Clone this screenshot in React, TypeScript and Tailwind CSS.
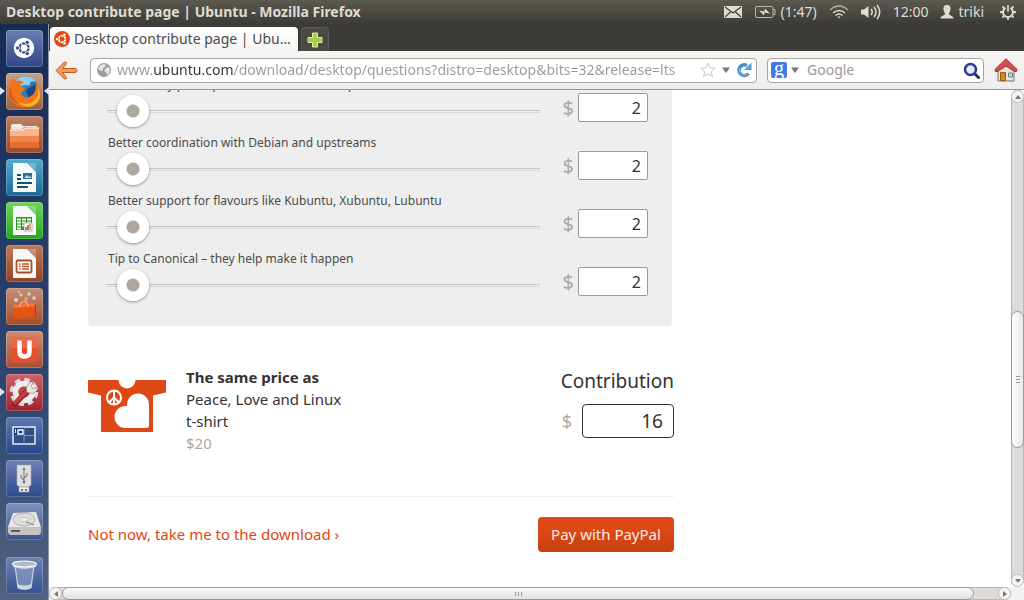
import { useState, type ReactNode } from "react";

const causes = [
  { id: "community", label: "Community participation in Ubuntu development" },
  { id: "debian", label: "Better coordination with Debian and upstreams" },
  { id: "flavours", label: "Better support for flavours like Kubuntu, Xubuntu, Lubuntu" },
  { id: "tip", label: "Tip to Canonical – they help make it happen" }
];

function CircleOfFriends({ className, fill }: { className?: string; fill: string }) {
  return (
    <svg viewBox="0 0 20 20" className={className} aria-hidden="true">
      <circle cx="10" cy="10" r="10" fill={fill} />
      <circle cx="10" cy="10" r="4.2" fill="none" stroke="currentColor" strokeWidth="2.3" />
      <g stroke={fill} strokeWidth="0.9">
        <path d="M10 10 16 10M10 10 7 4.8M10 10 7 15.2" />
      </g>
      <g fill="currentColor" stroke={fill} strokeWidth="0.8">
        <circle cx="3.8" cy="10" r="2" />
        <circle cx="13.1" cy="4.6" r="2" />
        <circle cx="13.1" cy="15.4" r="2" />
      </g>
    </svg>
  );
}

function Page({ children }: { children: ReactNode }) {
  return (
    <>
      <path d="M7 4h14l9 9v20H7z" fill="#f7f7f5" />
      <path d="M22 4h8v8z" fill="#fff" opacity="0.25" />
      {children}
    </>
  );
}

const apps = [
  {
    name: "Dash home",
    tile: "from-[#6b7fb4] to-[#2d4784]",
    icon: (
      <g color="#2f4a86">
        <circle cx="18" cy="18" r="10.2" fill="#fff" />
        <circle cx="18" cy="18" r="4.6" fill="none" stroke="currentColor" strokeWidth="2.4" />
        <path d="M18 18h7M18 18l-3.5-6M18 18l-3.5 6" stroke="#fff" strokeWidth="1" />
        <g fill="currentColor" stroke="#fff" strokeWidth="0.9">
          <circle cx="11.5" cy="18" r="2.1" />
          <circle cx="21.2" cy="12.4" r="2.1" />
          <circle cx="21.2" cy="23.6" r="2.1" />
        </g>
      </g>
    )
  },
  {
    name: "Firefox",
    tile: "from-[#c8a08a] to-[#a0603c]",
    icon: (
      <>
        <circle cx="20" cy="16" r="12.5" fill="#2b7cc0" />
        <path d="M10 8c5-6 16-6 20 1-4-2-7 0-6 3-4 1-7-1-9 2-3-1-6-2-5-6z" fill="#8fd0f0" />
        <path d="M20 18c3-5 8-4 9-8 3 5 3 9 0 14l-6 2z" fill="#174a84" />
        <path d="M4 10c1-3 3-4 4-5 0 2 1 3 3 3 3-1 5 0 7 2-3 0-4 2-3 4 2 0 4 0 4 2-1 2-3 2-4 4 1 4 6 6 10 3 4-2 6-8 4-14 5 5 7 12 3 18-4 7-13 9-20 6C4 29 0 19 4 10z" fill="#f0741a" />
        <path d="M8 24c3 6 12 9 18 5 5-3 7-8 6-15 3 6 3 12-1 16-6 6-17 5-23-6z" fill="#f9b22b" />
        <path d="M5 14c-1 8 3 14 10 17-9-1-14-9-10-17z" fill="#d9400d" opacity="0.8" />
      </>
    )
  },
  {
    name: "Files",
    tile: "from-[#bb8268] to-[#9c4b2b]",
    icon: (
      <>
        <path d="M5 12V9l2-1h8l2 2h14v6H5z" fill="#f6e9df" />
        <path d="M4 13h12l2-2h15v21H4z" fill="#ee8550" />
        <path d="M4 14h13l2-2h14v8H4z" fill="#f8b48d" />
        <path d="M4 26h29v6H4z" fill="#e46c31" />
        <path d="M4 14h13l2-2h14" fill="none" stroke="#fff" strokeWidth="1" />
      </>
    )
  },
  {
    name: "LibreOffice Writer",
    tile: "from-[#57a9cc] to-[#1b6a98]",
    icon: (
      <Page>
        <path d="M11 16h4M11 20h4M11 24h15M11 28h11" stroke="#16506f" strokeWidth="2" />
        <path d="M17 14h9v6h-9z" fill="#2e6f97" />
        <path d="m18 19 3-3 2 2 2-1v2z" fill="#b6e0f3" />
      </Page>
    )
  },
  {
    name: "LibreOffice Calc",
    tile: "from-[#6fd35c] to-[#22a51d]",
    icon: (
      <Page>
        <path d="M10 15h16v13H10z" fill="#2d9421" />
        <path d="M11 16.500h4v2h-4zm5 0h4v2h-4zm5 0h4v2h-4zm-10 3h4v2h-4zm5 0h4v2h-4zm5 0h4v2h-4zm-10 3h4v2h-4zm5 0h4v2h-4zm-5 3h4v2h-4z" fill="#edf9ea" />
        <path d="M18 21h8v8h-8z" fill="#fff" stroke="#888" strokeWidth="0.6" />
        <path d="M20 28v-3" stroke="#d34b2b" strokeWidth="1.500" />
        <path d="M22 28v-5" stroke="#3174b5" strokeWidth="1.500" />
        <path d="M24 28v-6" stroke="#e98f22" strokeWidth="1.500" />
      </Page>
    )
  },
  {
    name: "LibreOffice Impress",
    tile: "from-[#bd7a5b] to-[#924323]",
    icon: (
      <Page>
        <rect x="10.500" y="15.500" width="15" height="12" rx="1.500" fill="#fff" stroke="#a5512d" strokeWidth="1.800" />
        <path d="M13 19h1.500M13 21.500h1.500M13 24h1.500M16 19h7M16 21.500h7M16 24h7" stroke="#c2561c" strokeWidth="1.400" />
      </Page>
    )
  },
  {
    name: "Ubuntu Software Center",
    tile: "from-[#c58f7a] to-[#a44d29]",
    icon: (
      <>
        <g fill="#d8d2cf">
          <circle cx="10" cy="12" r="2" />
          <circle cx="15" cy="7" r="1.500" />
          <circle cx="23" cy="6" r="1.800" />
          <circle cx="28" cy="10" r="1.800" />
          <circle cx="20" cy="11" r="2" fill="#ef9d6b" />
          <circle cx="13" cy="4" r="1" />
        </g>
        <path d="m7 17 23-2v14L7 31z" fill="#e75312" />
        <path d="m7 17 23-2v3L7 20z" fill="#f4783a" />
        <path d="M14 19c0-7 8-7 8 0" fill="none" stroke="#f7a371" strokeWidth="1.400" />
        <path d="m29 15 1 2v11l-1 2z" fill="#b33a08" />
      </>
    )
  },
  {
    name: "Ubuntu One",
    tile: "from-[#cf8c74] to-[#a84e31]",
    icon: (
      <>
        <rect x="6" y="6" width="25" height="25" rx="2" fill="#e6512c" />
        <path d="M6 8a2 2 0 0 1 2-2h21a2 2 0 0 1 2 2v9H6z" fill="#f07350" opacity="0.7" />
        <path d="M13.500 9.500v11q0 5 5 5t5-5v-11" fill="none" stroke="#fff" strokeWidth="4.500" />
      </>
    )
  },
  {
    name: "System Settings",
    tile: "from-[#cd6267] to-[#9c2230]",
    icon: (
      <>
        <circle cx="18" cy="18" r="12" fill="none" stroke="#dedad7" strokeWidth="4.500" strokeDasharray="5.400 4.020" />
        <circle cx="18" cy="18" r="8.500" fill="none" stroke="#efedeb" strokeWidth="5.500" />
        <path d="m9 30 13-14" stroke="#8b1a22" strokeWidth="5.500" strokeLinecap="round" />
        <path d="m9 29 12-12" stroke="#cc3b37" strokeWidth="3.500" strokeLinecap="round" />
        <path d="M21 18c-2-5 1-10 7-11l-3 5 2 3 5-2c-1 6-6 8-11 5z" fill="#e9e6e3" stroke="#8c8784" strokeWidth="0.700" />
      </>
    )
  },
  {
    name: "Workspace Switcher",
    tile: "from-[#6079b1] to-[#26458a]",
    icon: (
      <>
        <path d="M7 10h22v17H7z" fill="#314f85" stroke="#e9edf4" strokeWidth="1.500" />
        <path d="M18 10v17M7 18.500h22" stroke="#8d9ebf" strokeWidth="0.900" />
        <path d="M8 11h10v7.500H8z" fill="#203d73" />
        <path d="M12 13h5v4h-5z" fill="none" stroke="#fff" strokeWidth="1.400" />
        <path d="M9.500 12v4" stroke="#dfe5ef" />
      </>
    )
  },
  {
    name: "USB drive",
    tile: "from-[#6c80b4] to-[#2d4a8d]",
    icon: (
      <>
        <path d="M11 5h14v20l-3 2h-8l-3-2z" fill="#dedfdf" stroke="#a9acb1" strokeWidth="0.700" />
        <path d="M13 27h10v5H13z" fill="#f1f1f0" stroke="#9a9da2" strokeWidth="0.700" />
        <path d="M15 29h2v2h-2zm4 0h2v2h-2z" fill="#777" />
        <path d="M18 9v13M18 20l-3-2.500V15M18 18l3-2.500V13" fill="none" stroke="#777b80" strokeWidth="1.100" />
        <path d="m16.300 10 1.700-3 1.700 3z" fill="#777b80" />
        <circle cx="18" cy="22" r="1.500" fill="#777b80" />
      </>
    )
  },
  {
    name: "Hard disk",
    tile: "from-[#8193bd] to-[#39538d]",
    icon: (
      <>
        <path d="m7 10 23-1 5 15H2z" fill="#e7e7e4" />
        <path d="M2 24h33v6l-2 2H4l-2-2z" fill="#c3c4c2" />
        <path d="M5 27h9v2H5z" fill="#5b5d5f" />
        <ellipse cx="18" cy="16.500" rx="11" ry="6.500" fill="#dcdddb" stroke="#9fa19f" strokeWidth="0.700" />
        <ellipse cx="18" cy="16.500" rx="3.500" ry="2" fill="#f6f6f4" stroke="#a9aba8" strokeWidth="0.600" />
        <path d="m28 22-8-3" stroke="#8d908d" strokeWidth="1.300" />
      </>
    )
  },
  {
    name: "Trash",
    tile: "from-[#6e83b5] to-[#34518f] mt-auto",
    icon: (
      <>
        <path d="M9 8h19l-3 23q-7 3-13 0z" fill="#8ea0c4" opacity="0.650" />
        <path d="m9 8 3 23M28 8l-3 23" stroke="#c9d2e2" strokeWidth="1.200" />
        <path d="M11.500 27q7 3 14 0l-.6 4.500q-6.500 2.500-12.800 0z" fill="#d4d6d5" />
        <ellipse cx="18.500" cy="7" rx="12" ry="2.800" fill="#aeb9cd" stroke="#edf0f3" strokeWidth="1.300" />
        <path d="M7 9q11.500 4 23 0" fill="none" stroke="#dfe4ea" strokeWidth="1.500" />
      </>
    )
  }
];

function TopBar() {
  return (
    <header className="flex h-6 shrink-0 items-center justify-between bg-linear-to-b from-[#5b5950] to-[#3d3b37] pr-2 pl-[6px] text-sm text-[#dfdbd2]">
      <h1 className="truncate font-bold">Desktop contribute page | Ubuntu - Mozilla Firefox</h1>
      <div className="flex shrink-0 items-center">
        <svg viewBox="0 0 18 12" className="mr-[13px] h-3 w-[18px]" aria-label="Messages">
          <path d="M0 0h18v12H0z" fill="#dfdbd2" />
          <path d="m1 1 8 6 8-6M1 11l5.500-5M17 11l-5.500-5" fill="none" stroke="#45433c" strokeWidth="1.300" />
        </svg>
        <svg viewBox="0 0 21 12" className="mr-1 h-3 w-[21px]" aria-label="Battery">
          <rect x="0.500" y="0.500" width="17.500" height="11" rx="1.500" fill="none" stroke="#bdb9b0" />
          <path d="M18.500 3.500h1.500v5h-1.500" fill="none" stroke="#bdb9b0" />
          <path d="m4 4.500 5.500 1L10 2.500l5 5-5.500-1L9 9.500z" fill="#dfdbd2" />
        </svg>
        <span className="mr-3">(1:47)</span>
        <svg viewBox="0 0 20 14" className="mr-3 h-[14px] w-5" fill="none" stroke="#dfdbd2" strokeWidth="1.500" aria-label="Network">
          <path d="M1 5q9-8 18 0" opacity="0.700" />
          <path d="M4 8q6-5 12 0M6.500 10.500q3.500-3 7 0" />
          <path d="m8.500 11.500 1.500 2 1.500-2z" fill="#dfdbd2" stroke="none" />
        </svg>
        <svg viewBox="0 0 20 16" className="mr-3 h-4 w-5" fill="none" stroke="#dfdbd2" strokeWidth="1.500" aria-label="Sound">
          <path d="M0 5.500h3L7.500 2v12L3 10.500H0z" fill="#dfdbd2" stroke="none" />
          <path d="M10 5q2.500 3 0 6M13 3q4 5 0 10M16 1q5.500 7 0 14" />
        </svg>
        <span className="mr-3">12:00</span>
        <svg viewBox="0 0 14 14" className="mr-1 size-[14px]" fill="#dfdbd2" aria-hidden="true">
          <path d="M7 0c3 0 3.800 2 3.500 4.500C10.200 7 9 8 9 9c0 1.500 4.500 1.500 4.500 4.500H.5C.5 10.500 5 10.500 5 9c0-1-1.200-2-1.500-4.500C3.200 2 4 0 7 0z" />
        </svg>
        <span className="mr-4">triki</span>
        <svg viewBox="0 0 16 16" className="size-4" fill="none" stroke="#dfdbd2" aria-label="Session">
          <path d="M5.500 3.800a5 5 0 1 0 5 0" strokeWidth="2" />
          <path d="M8 1v6.500" strokeWidth="1.700" />
          <path d="M2.400 2.400l2 2M13.600 2.400l-2 2M0 8h3M13 8h3M2.400 13.600l2-2M13.600 13.600l-2-2M8 13v3" strokeWidth="1.800" />
        </svg>
      </div>
    </header>
  );
}

function Launcher() {
  return (
    <nav className="flex w-[49px] shrink-0 flex-col gap-[6px] border-r border-[#8997b1] bg-linear-to-b from-[#152c55] via-[#2c4570] via-60% to-[#50627e] px-[6px] py-[6px]">
      {apps.map((app) => (
        <button
          key={app.name}
          type="button"
          aria-label={app.name}
          className={"relative size-[37px] shrink-0 rounded bg-linear-to-b inset-ring inset-ring-white/20 " + app.tile}
        >
          <svg viewBox="0 0 37 37" className="size-full" fill="none">
            {app.icon}
          </svg>
          {(app.name === "Firefox" || app.name === "System Settings") && (
            <span className="absolute top-[14px] -left-[6px] border-y-4 border-l-5 border-y-transparent border-l-[#dfe3ea]" />
          )}
          {app.name === "Firefox" && (
            <span className="absolute top-[14px] -right-[6px] border-y-4 border-r-5 border-y-transparent border-r-[#dfe3ea]" />
          )}
        </button>
      ))}
    </nav>
  );
}

function TabStrip() {
  return (
    <div className="flex h-[27px] shrink-0 items-end gap-[3px] bg-[#3c3b37] pl-px">
      <div className="flex h-6 w-62 items-center gap-1 rounded-t bg-linear-to-b from-white to-[#f5f4f3] px-1 text-sm text-[#4c4c4c]">
        <CircleOfFriends className="size-4 shrink-0 text-white" fill="#dd4814" />
        <span className="truncate">Desktop contribute page | Ubu…</span>
      </div>
      <button type="button" aria-label="New tab" className="flex h-6 w-7 items-center justify-center rounded-t border border-b-0 border-[#5c5a54] bg-[#4a4944]">
        <svg viewBox="0 0 16 16" className="size-4">
          <path d="M5.500 1h5v4.500H15v5h-4.500V15h-5v-4.500H1v-5h4.500z" fill="#a5cf45" stroke="#d8efa4" />
        </svg>
      </button>
    </div>
  );
}

function Toolbar() {
  return (
    <div className="flex h-[39px] shrink-0 items-center border-b border-[#979593] bg-linear-to-b from-[#f5f4f3] to-[#efedec] px-[6px] text-sm">
      <button type="button" aria-label="Back" className="mr-3">
        <svg viewBox="0 0 23 19" className="h-[19px] w-[23px]">
          <path d="M9.500 1 1 9.500 9.500 18q2.500.5 2-1.500L7.500 11.500H20q2-.3 2-2T20 7.500H7.500l4-5Q11.500.5 9.500 1z" fill="#f39a63" stroke="#c35a20" />
        </svg>
      </button>
      <div className="flex h-[25px] min-w-0 grow items-center rounded border border-[#a8a4a0] bg-white pr-1 pl-[6px]">
        <svg viewBox="0 0 14 14" className="mr-[6px] size-[14px] shrink-0" aria-hidden="true">
          <circle cx="7" cy="7" r="7" fill="#9b9b9b" />
          <path d="M3 2.500 6 1l3 1-1 2-2 1v2L4 8 1 6zM9 5l3-1 1 3-1 4-2 1-1-3-2-1z" fill="#e6e6e6" />
        </svg>
        <input
          type="text"
          aria-label="Address"
          defaultValue="www.ubuntu.com/download/desktop/questions?distro=desktop&bits=32&release=lts"
          className="min-w-0 grow bg-[linear-gradient(90deg,#999_37px,#333_37px,#333_117px,#999_117px)] bg-clip-text text-transparent outline-none"
        />
        <svg viewBox="0 0 16 16" className="mr-[6px] size-4 shrink-0" aria-hidden="true">
          <path d="m8 1 2.100 4.700 5.100.5-3.900 3.400 1.200 5L8 12l-4.500 2.600 1.200-5L.8 6.200l5.100-.5z" fill="#fff" stroke="#c6c6c6" />
        </svg>
        <svg viewBox="0 0 8 6" className="mr-[6px] h-[6px] w-2 shrink-0" aria-hidden="true">
          <path d="M0 .5h8L4 6z" fill="#777" />
        </svg>
        <button type="button" aria-label="Reload" className="shrink-0">
          <svg viewBox="0 0 16 16" className="size-4">
            <path d="M12.500 11.500A5.300 5.300 0 1 1 11 3.500" fill="none" stroke="#4a8ecb" strokeWidth="3.500" />
            <path d="M15.500.5v7.500H8z" fill="#5b9cd6" />
            <path d="M11.500 12A5.300 5.300 0 0 1 3.500 6" fill="none" stroke="#8fc0e8" />
          </svg>
        </button>
      </div>
      <div className="mx-[10px] flex h-[25px] w-[217px] shrink-0 items-center rounded border border-[#a8a4a0] bg-white px-[3px]">
        <span className="mr-1 flex size-4 shrink-0 items-center justify-center rounded-xs bg-[#4479ee] pb-1 font-['Liberation_Serif',serif] text-xl leading-3 text-white">
          g
        </span>
        <svg viewBox="0 0 8 6" className="mr-2 h-[6px] w-2 shrink-0" aria-hidden="true">
          <path d="M0 .5h8L4 6z" fill="#777" />
        </svg>
        <input type="search" aria-label="Search with Google" placeholder="Google" className="min-w-0 grow outline-none placeholder:text-[#999]" />
        <svg viewBox="0 0 17 17" className="size-[17px] shrink-0" aria-hidden="true">
          <path d="m11.500 11.500 4 4" stroke="#333" strokeWidth="3" strokeLinecap="round" />
          <circle cx="7.500" cy="7.500" r="5.500" fill="#e3e9f8" stroke="#2f3c8c" strokeWidth="2.500" />
        </svg>
      </div>
      <button type="button" aria-label="Home" className="shrink-0">
        <svg viewBox="0 0 24 24" className="size-6">
          <path d="M4 11 12 5l8 6v12H4z" fill="#e9e6df" stroke="#77736b" />
          <path d="M6.500 14.500h5v8h-5z" fill="#d88a1d" stroke="#9c5a0c" />
          <path d="M14.500 15h4v4h-4z" fill="#b9d3e2" stroke="#6f7f88" />
          <path d="M12 .8 1 11.500q0 3 2.500 2L12 8l8.500 5.500q2.500 1 2.500-2z" fill="#d2504c" stroke="#a92b2a" />
        </svg>
      </button>
    </div>
  );
}

function CauseRow({ id, label }: { id: string; label: string }) {
  const [amount, setAmount] = useState(2);
  return (
    <div className="flex h-[58px]">
      <div className="flex grow flex-col">
        <label htmlFor={id} className="pt-[2px] pl-px text-xs leading-5 text-[#4b4b4b]">
          {label}
        </label>
        <input
          id={id}
          type="range"
          min={0}
          max={80}
          value={amount}
          onChange={(e) => setAmount(Number(e.target.value))}
          className="h-8 w-full appearance-none bg-transparent [&::-webkit-slider-runnable-track]:h-[3px] [&::-webkit-slider-runnable-track]:border-t [&::-webkit-slider-runnable-track]:border-b [&::-webkit-slider-runnable-track]:border-t-[#c3c3c3] [&::-webkit-slider-runnable-track]:border-b-[#dadada] [&::-webkit-slider-thumb]:-mt-4 [&::-webkit-slider-thumb]:size-8 [&::-webkit-slider-thumb]:appearance-none [&::-webkit-slider-thumb]:rounded-full [&::-webkit-slider-thumb]:bg-[radial-gradient(circle,#aea79f_6px,#fff_7px)] [&::-webkit-slider-thumb]:shadow-[0_1px_3px_rgba(0,0,0,0.4)]"
        />
      </div>
      <div className="flex shrink-0 items-center gap-1 self-start pt-5 pl-[23px]">
        <span className="text-xl leading-7 text-[#aea79f]">$</span>
        <input
          type="text"
          aria-label={label + " amount"}
          value={amount}
          onChange={(e) => setAmount(Number(e.target.value) || 0)}
          className="h-[29px] w-[70px] rounded-xs border border-[#999] bg-white px-[6px] text-right text-base text-[#333] outline-none"
        />
      </div>
    </div>
  );
}

function ContributePage() {
  return (
    <main className="min-w-0 grow overflow-hidden bg-white pl-[39px] text-[#333]">
      <form className="-mt-[17px] w-[586px] max-w-full" onSubmit={(e) => e.preventDefault()}>
        <section className="mr-[2px] rounded-b bg-[#eee] pr-6 pb-[21px] pl-[19px]">
          {causes.map((cause) => (
            <CauseRow key={cause.id} id={cause.id} label={cause.label} />
          ))}
        </section>

        <section className="mt-10 flex justify-between border-b border-[#eee] pb-[42px]">
          <div className="flex gap-5">
            <svg viewBox="0 0 78 52" className="mt-[14px] h-[52px] w-[78px]" aria-hidden="true">
              <path d="M0 0h30.500a8.500 8.500 0 0 0 17 0H78v12.500l-13 3V52H13V15.500L0 12.500z" fill="#dd4814" />
              <path d="M39 26V24.500a11 11 0 0 1 22 0v21q0 2.500-2.500 2.500H37.500a11 11 0 0 1 0-22z" fill="#fff" />
              <g fill="none" stroke="#fff" strokeWidth="2">
                <circle cx="26" cy="17.500" r="7" />
                <path d="M26 10.500v14M26 17.500l-5 5M26 17.500l5 5" />
              </g>
            </svg>
            <div className="w-40 text-[15px] leading-[22px]">
              <p className="font-bold">The same price as</p>
              <p>Peace, Love and Linux t-shirt</p>
              <p className="text-[#aea79f]">$20</p>
            </div>
          </div>
          <div className="flex flex-col">
            <label htmlFor="total" className="text-[19px] leading-[30px]">
              Contribution
            </label>
            <div className="mt-2 flex items-center justify-end gap-[10px]">
              <span className="text-lg text-[#aea79f]">$</span>
              <input
                id="total"
                type="text"
                defaultValue="16"
                className="h-[34px] w-[92px] rounded border border-[#333] bg-white px-[10px] text-right text-[19px] outline-none"
              />
            </div>
          </div>
        </section>

        <div className="flex items-center justify-between pt-5">
          <a href="#download" className="text-[15px] text-[#dd4814]">
            Not now, take me to the download ›
          </a>
          <button type="submit" className="h-[35px] w-[136px] rounded bg-linear-to-b from-[#dd4814] from-40% to-[#c64012] text-[15px] text-[#fbeae4]">
            Pay with PayPal
          </button>
        </div>
      </form>
    </main>
  );
}

function Arrow({ d }: { d: string }) {
  return (
    <span className="flex size-[13px] shrink-0 items-center justify-center rounded-full border border-[#c3bfbc] bg-[#f5f4f3]">
      <svg viewBox="0 0 6 6" className="size-[6px]">
        <path d={d} fill="#777" />
      </svg>
    </span>
  );
}

function VerticalScrollbar() {
  return (
    <div className="flex w-[13px] shrink-0 flex-col rounded-full bg-[#dddbd9] shadow-[inset_0_0_0_1px_#bbb8b5]" aria-hidden="true">
      <Arrow d="M0 5h6L3 1z" />
      <div className="flex-[208]" />
      <div className="flex flex-[136] flex-col items-center justify-center gap-[2px] rounded-full border border-[#999] bg-linear-to-r from-white to-[#e9e7e6]">
        <span className="h-px w-1 bg-[#999]" />
        <span className="h-px w-1 bg-[#999]" />
        <span className="h-px w-1 bg-[#999]" />
      </div>
      <div className="flex-[126]" />
      <Arrow d="M0 1h6L3 5z" />
    </div>
  );
}

function HorizontalScrollbar() {
  return (
    <div className="flex h-[13px] shrink-0 bg-[#f2f1f0] pr-[13px]" aria-hidden="true">
      <div className="flex grow rounded-full bg-[#dddbd9] shadow-[inset_0_0_0_1px_#bbb8b5]">
        <Arrow d="M5 0v6L1 3z" />
        <div className="flex flex-[912] items-center justify-center gap-[2px] rounded-full border border-[#999] bg-linear-to-b from-[#fafafa] to-[#e3e0de]">
          <span className="h-1 w-px bg-[#999]" />
          <span className="h-1 w-px bg-[#999]" />
          <span className="h-1 w-px bg-[#999]" />
        </div>
        <div className="flex-[24]" />
        <Arrow d="M1 0v6l4-3z" />
      </div>
    </div>
  );
}

export default function App() {
  return (
    <div className="flex h-screen flex-col overflow-hidden font-['Noto_Sans','Open_Sans',sans-serif]">
      <TopBar />
      <div className="flex min-h-0 grow">
        <Launcher />
        <div className="flex min-w-0 grow flex-col">
          <TabStrip />
          <Toolbar />
          <div className="flex min-h-0 grow">
            <ContributePage />
            <VerticalScrollbar />
          </div>
          <HorizontalScrollbar />
        </div>
      </div>
    </div>
  );
}
